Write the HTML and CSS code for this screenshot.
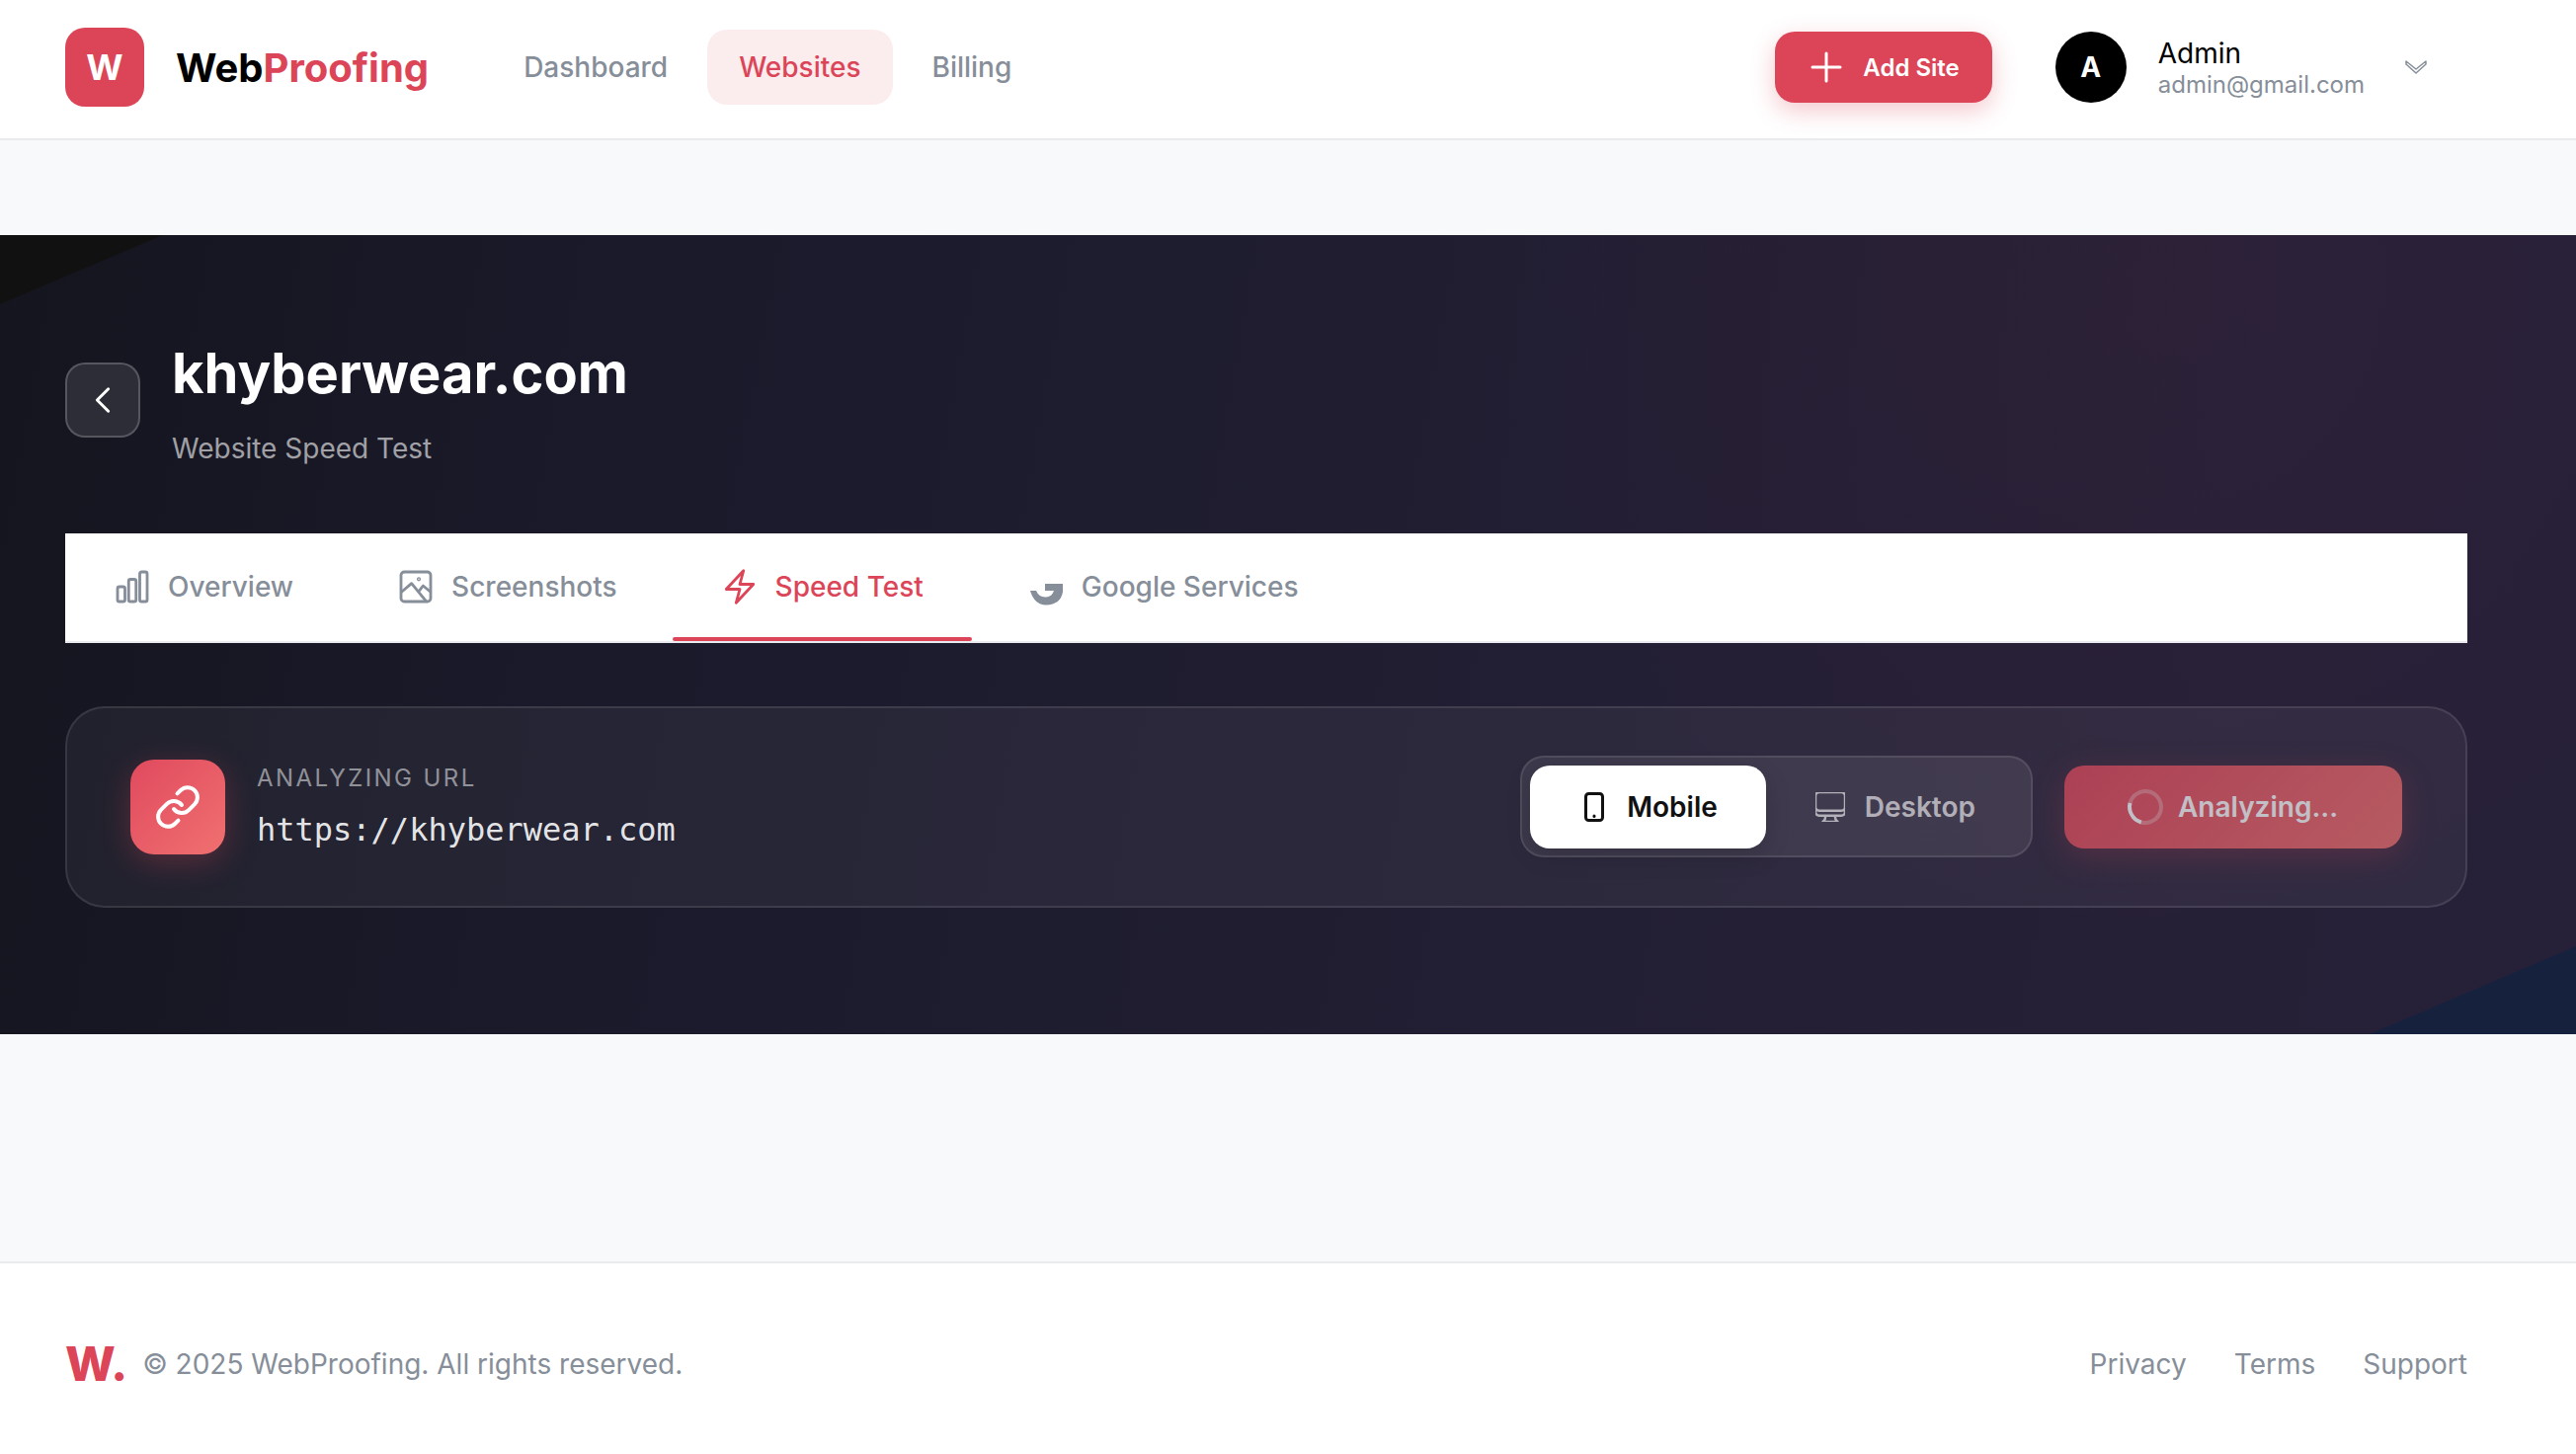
FILE: index.html
```html
<!DOCTYPE html>
<html lang="en">
  <head>
    <meta charset="utf-8" />
    <title>khyberwear.com - Speed Test</title>
    <link rel="stylesheet" href="styles.css">
  </head>

  <body>
    <header class="topbar">
      <a class="brand">
        <span class="brand-mark">W</span>
        <span class="brand-name">Web<em>Proofing</em></span>
      </a>
      <nav class="main-nav">
        <a>Dashboard</a>
        <a class="is-active">Websites</a>
        <a>Billing</a>
      </nav>
      <div class="topbar-right">
        <button class="add-site">
          <svg viewBox="0 0 32 32"><path d="M16 2v28M2 16h28" /></svg>
          Add Site
        </button>
        <div class="user">
          <span class="avatar">A</span>
          <div class="user-text">
            <div class="user-name">Admin</div>
            <div class="user-mail">admin@gmail.com</div>
          </div>
          <svg class="user-caret" viewBox="0 0 24 16"><path d="M2 2v3l10 9 10-9V2l-10 8z" /></svg>
        </div>
      </div>
    </header>

    <main class="page">
      <section class="hero">
        <div class="hero-inner">
          <div class="hero-head">
            <button class="back">
              <svg viewBox="0 0 24 24"><path d="M15.75 19.5L8.25 12l7.5-7.5" /></svg>
            </button>
            <div>
              <h1>khyberwear.com</h1>
              <p>Website Speed Test</p>
            </div>
          </div>

          <div class="tabs">
            <a class="tab">
              <svg viewBox="0 0 24 24"><path d="M3 13.125C3 12.504 3.504 12 4.125 12h2.25c.621 0 1.125.504 1.125 1.125v6.75C7.5 20.496 6.996 21 6.375 21h-2.25A1.125 1.125 0 013 19.875v-6.75zM9.75 8.625c0-.621.504-1.125 1.125-1.125h2.25c.621 0 1.125.504 1.125 1.125v11.25c0 .621-.504 1.125-1.125 1.125h-2.25a1.125 1.125 0 01-1.125-1.125V8.625zM16.5 4.125c0-.621.504-1.125 1.125-1.125h2.25C20.496 3 21 3.504 21 4.125v15.75c0 .621-.504 1.125-1.125 1.125h-2.25a1.125 1.125 0 01-1.125-1.125V4.125z" /></svg>
              Overview
            </a>
            <a class="tab">
              <svg viewBox="0 0 24 24"><rect x="3" y="3" width="18" height="18" rx="2" /><circle cx="13.8" cy="7.4" r=".4" /><path d="M3.5 15l5.9-5 8.6 10.5M14.4 14l2-2.6 4.4 3.6" /></svg>
              Screenshots
            </a>
            <a class="tab is-active">
              <svg viewBox="0 0 24 24"><path d="M3.75 13.5l10.5-11.25L12 10.5h8.25L9.75 21.75 12 13.5H3.75z" /></svg>
              Speed Test
            </a>
            <a class="tab">
              <svg class="tab-g" viewBox="13 12 33 22"><path d="M13 19h6q3 7 10 6.500q6-.5 8-6.500h-9v-7h18v8q-2 13-17 13.500q-12-.5-16-14.500z" /></svg>
              Google Services
            </a>
          </div>

          <div class="url-card">
            <span class="url-icon">
              <svg viewBox="0 0 24 24"><path d="M10 13a5 5 0 0 0 7.54.54l3-3a5 5 0 0 0-7.07-7.07l-1.72 1.71" /><path d="M14 11a5 5 0 0 0-7.54-.54l-3 3a5 5 0 0 0 7.07 7.07l1.71-1.71" /></svg>
            </span>
            <div class="url-text">
              <div class="url-label">ANALYZING URL</div>
              <div class="url-value">https://khyberwear.com</div>
            </div>
            <div class="device-toggle">
              <button class="device is-active">
                <svg viewBox="0 0 30 30"><rect x="6.500" y="1.500" width="17" height="27" rx="3" /><path d="M15 24v.5" /></svg>
                Mobile
              </button>
              <button class="device">
                <svg viewBox="3 3 18 18"><path d="M9 17.25v1.007a3 3 0 01-.879 2.122L7.5 21h9l-.621-.621A3 3 0 0115 18.257V17.25m6-12V15a2.25 2.25 0 01-2.25 2.25H5.25A2.25 2.25 0 013 15V5.25m18 0A2.25 2.25 0 0018.75 3H5.25A2.25 2.25 0 003 5.25m18 0V12a2.25 2.25 0 01-2.25 2.25H5.25A2.25 2.25 0 013 12V5.25" /></svg>
                Desktop
              </button>
            </div>
            <button class="analyze">
              <span class="spinner"></span>
              Analyzing...
            </button>
          </div>
        </div>
      </section>
    </main>

    <footer class="footer">
      <div class="footer-left">
        <span class="footer-mark">W<em>.</em></span>
        <span>© 2025 WebProofing. All rights reserved.</span>
      </div>
      <div class="footer-links">
        <a>Privacy</a>
        <a>Terms</a>
        <a>Support</a>
      </div>
    </footer>
  </body>
</html>
```

FILE: styles.css
```css
:root {
  --color-red: #dc4558;
  --color-gray: #868e99;
  --color-line: #e9ebef;
  --color-page: #f8f9fb;
}

* {
  box-sizing: border-box;
}

html,
body {
  height: 100%;
}

body {
  margin: 0;
  display: flex;
  flex-direction: column;
  min-height: 100vh;
  font-family: Inter, 'Liberation Sans', sans-serif;
  background-color: var(--color-page);
  color: #000;
}

button {
  font-family: inherit;
  border: 0;
  cursor: pointer;
}

svg {
  fill: none;
  stroke: currentColor;
  stroke-linecap: round;
  stroke-linejoin: round;
  flex: none;
}

/* top bar */
.topbar {
  display: flex;
  align-items: center;
  height: 142px;
  padding: 0 110px 4px 66px;
  background-color: #fff;
  border-bottom: 2px solid var(--color-line);
}

.brand {
  display: flex;
  align-items: center;
  gap: 32px;
}

.brand-mark {
  display: flex;
  align-items: center;
  justify-content: center;
  width: 80px;
  height: 80px;
  border-radius: 20px;
  background-color: var(--color-red);
  color: #fff;
  font-size: 36px;
  font-weight: 700;
}

.brand-name {
  font-size: 40px;
  font-weight: 700;
}

.brand-name em {
  font-style: normal;
  color: var(--color-red);
}

.main-nav {
  display: flex;
  gap: 8px;
  margin-left: 64px;
}

.main-nav a {
  display: flex;
  align-items: center;
  height: 76px;
  padding: 0 32px;
  border-radius: 20px;
  font-size: 28px;
  font-weight: 500;
  color: var(--color-gray);
}

.main-nav a.is-active {
  background-color: #fbedee;
  color: var(--color-red);
}

.topbar-right {
  display: flex;
  align-items: center;
  gap: 64px;
  margin-left: auto;
}

.add-site {
  display: flex;
  align-items: center;
  gap: 21px;
  height: 72px;
  padding: 0 33px 0 36px;
  border-radius: 20px;
  background-color: var(--color-red);
  box-shadow: 0 8px 24px rgba(220, 69, 88, 0.3);
  color: #fff;
  font-size: 24px;
  font-weight: 600;
}

.add-site svg {
  width: 32px;
  height: 32px;
  stroke-width: 3;
}

.user {
  display: flex;
  align-items: center;
  gap: 32px;
  padding-right: 40px;
}

.avatar {
  display: flex;
  align-items: center;
  justify-content: center;
  width: 72px;
  height: 72px;
  border-radius: 50%;
  background-color: #000;
  color: #fff;
  font-size: 28px;
  font-weight: 700;
}

.user-text {
  padding-top: 1px;
}

.user-name {
  font-size: 28px;
  line-height: 34px;
}

.user-mail {
  font-size: 24px;
  line-height: 30px;
  color: var(--color-gray);
}

.user-caret {
  width: 24px;
  height: 16px;
  margin-left: 8px;
  color: var(--color-gray);
  stroke-width: 1.5;
}

/* hero */
.page {
  flex: 1;
  padding-top: 96px;
}

.hero {
  position: relative;
  overflow: hidden;
  background: linear-gradient(135deg, #111 0%, #111 10%, #16213e 85%, #16213e 100%);
}

.hero::before {
  content: '';
  position: absolute;
  inset: 0;
  clip-path: polygon(165px 0, 100% 0, 100% calc(100% - 89px), calc(100% - 209px) 100%, 0 100%, 0 70px);
  background:
    radial-gradient(circle at 83% 5%, rgba(220, 69, 88, 0.04), rgba(220, 69, 88, 0) 30%),
    linear-gradient(100deg, #15151f 0%, #1a1a2b 25%, #221e33 60%, #262037 85%, #262038 100%);
}

.hero-inner {
  position: relative;
  padding: 107px 110px 128px 66px;
}

.hero-head {
  display: flex;
  align-items: flex-start;
  gap: 32px;
  margin-bottom: 63px;
}

.back {
  display: flex;
  align-items: center;
  justify-content: center;
  width: 76px;
  height: 76px;
  margin-top: 22px;
  border: 2px solid rgba(255, 255, 255, 0.2);
  border-radius: 20px;
  background-color: rgba(255, 255, 255, 0.1);
  color: #fff;
}

.back svg {
  width: 36px;
  height: 36px;
  stroke-width: 2;
}

.hero h1 {
  margin: 0 0 20px;
  font-size: 56px;
  font-weight: 700;
  line-height: 67px;
  color: #fff;
}

.hero p {
  margin: 0;
  font-size: 28px;
  line-height: 45px;
  color: rgba(255, 255, 255, 0.6);
}

/* tabs */
.tabs {
  display: flex;
  gap: 7px;
  height: 111px;
  background-color: #fff;
  border-bottom: 2px solid var(--color-line);
}

.tab {
  position: relative;
  display: flex;
  align-items: center;
  gap: 16px;
  height: 109px;
  padding: 0 49px 1px 50px;
  font-size: 28px;
  font-weight: 500;
  color: var(--color-gray);
}

.tab svg {
  width: 40px;
  height: 40px;
  stroke-width: 1.7;
  margin-left: -2px;
}

.tab.is-active {
  color: var(--color-red);
}

.tab.is-active::after {
  content: '';
  position: absolute;
  left: 0;
  right: 0;
  bottom: 0;
  height: 4px;
  border-radius: 2px;
  background-color: var(--color-red);
}

.tab .tab-g {
  width: 33px;
  height: 22px;
  margin: 16px 3px 0 2px;
  fill: var(--color-gray);
  stroke: none;
}

/* url card */
.url-card {
  display: flex;
  align-items: center;
  gap: 32px;
  height: 204px;
  margin-top: 64px;
  padding: 0 64px;
  border: 2px solid rgba(255, 255, 255, 0.1);
  border-radius: 40px;
  background-color: rgba(255, 255, 255, 0.05);
}

.url-icon {
  display: flex;
  align-items: center;
  justify-content: center;
  width: 96px;
  height: 96px;
  border-radius: 24px;
  background: linear-gradient(135deg, #e04a5e, #f07070);
  box-shadow: 0 8px 32px rgba(220, 69, 88, 0.3);
  color: #fff;
}

.url-icon svg {
  width: 48px;
  height: 48px;
  stroke-width: 2;
}

.url-text {
  flex: 1;
}

.url-label {
  font-size: 24px;
  line-height: 32px;
  letter-spacing: 2.4px;
  color: rgba(255, 255, 255, 0.5);
}

.url-value {
  margin-top: 14px;
  font-family: 'DejaVu Sans Mono', monospace;
  font-size: 32px;
  line-height: 44px;
  color: rgba(255, 255, 255, 0.9);
}

.device-toggle {
  display: flex;
  height: 103px;
  margin-bottom: 2px;
  padding: 8px;
  border: 2px solid rgba(255, 255, 255, 0.1);
  border-radius: 24px;
  background-color: rgba(255, 255, 255, 0.08);
}

.device {
  display: flex;
  align-items: center;
  gap: 20px;
  height: 84px;
  padding: 0 48px 0 50px;
  border-radius: 20px;
  background: none;
  font-size: 28px;
  font-weight: 600;
  color: rgba(255, 255, 255, 0.6);
}

.device svg {
  width: 30px;
  height: 30px;
  stroke-width: 1.5;
}

.device.is-active {
  gap: 18px;
  padding-right: 49px;
  background-color: #fff;
  box-shadow: 0 8px 24px rgba(0, 0, 0, 0.15);
  color: #111;
}

.device.is-active svg {
  stroke-width: 3;
}

.analyze {
  display: flex;
  align-items: center;
  gap: 15px;
  width: 342px;
  height: 84px;
  padding-left: 64px;
  border-radius: 20px;
  background: linear-gradient(135deg, #e04a5e, #f07070);
  box-shadow: 0 8px 32px rgba(220, 69, 88, 0.3);
  opacity: 0.7;
  font-size: 28px;
  font-weight: 600;
  color: #fff;
}

.spinner {
  width: 36px;
  height: 36px;
  border: 4px solid rgba(255, 255, 255, 0.3);
  border-left-color: #fff;
  border-radius: 50%;
  transform: rotate(-30deg);
}

/* footer */
.footer {
  display: flex;
  align-items: center;
  justify-content: space-between;
  height: 195px;
  padding: 11px 110px 0 66px;
  background-color: #fff;
  border-top: 2px solid var(--color-line);
  font-size: 28px;
  color: var(--color-gray);
}

.footer-left {
  display: flex;
  align-items: center;
  gap: 15px;
}

.footer-mark {
  margin-top: -2px;
  font-size: 48px;
  font-weight: 800;
  color: var(--color-red);
}

.footer-mark em {
  font-style: normal;
}

.footer-links {
  display: flex;
  gap: 48px;
}
```
